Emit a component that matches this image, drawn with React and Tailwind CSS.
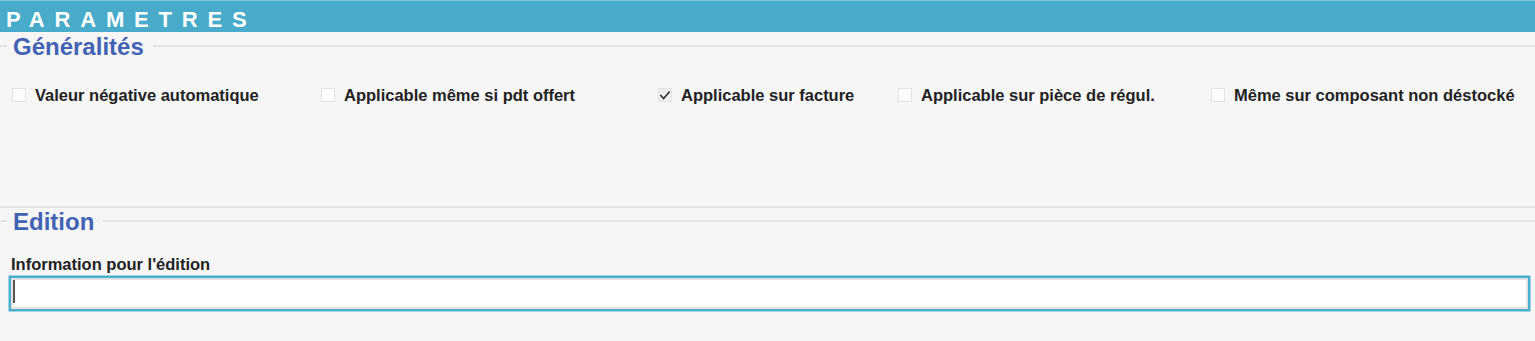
import React from "react";

const font = { fontFamily: '"Liberation Sans", Arial, Helvetica, sans-serif' };

function Box({ checked }) {
  return (
    <span
      className={`flex h-[14px] w-[14px] shrink-0 items-center justify-center border border-[#e3e3e3] ${
        checked ? "bg-[#eeeeee]" : "bg-[#fdfdfd]"
      }`}
    >
      {checked && (
        <svg width="13" height="13" viewBox="0 0 13 13" fill="none">
          <path d="M2 6.6 L5 9.8 L11 2.8" stroke="#2b2b2b" strokeWidth="1.6" strokeLinecap="square" />
        </svg>
      )}
    </span>
  );
}

function Check({ label, checked }) {
  return (
    <label className="flex items-center gap-[9px] whitespace-nowrap">
      <Box checked={checked} />
      <span className="text-[16.5px] font-bold leading-[20px] text-[#222]">{label}</span>
    </label>
  );
}

function Legend({ children }) {
  return (
    <div className="flex items-start">
      <div className="mt-[12px] h-[2px] w-[7px] bg-[#e4e4e4]" />
      <span className="pl-[6px] pr-[9px] text-[24px] font-bold leading-[28px] text-[#4262b3]">
        {children}
      </span>
      <div className="mt-[12px] h-[2px] flex-1 bg-[#e4e4e4]" />
    </div>
  );
}

export default function App() {
  return (
    <div className="min-h-[341px] w-full bg-[#f6f6f6]" style={font}>
      <div className="h-[32px] border-t border-[#7fc4da] bg-[#47abc9] pl-[6px] pt-[8px]">
        <span className="block text-[22px] font-bold leading-[22px] tracking-[9.8px] text-white">
          PARAMETRES
        </span>
      </div>

      <section className="mt-[1px] border-b-2 border-[#e4e4e4]">
        <Legend>Généralités</Legend>
        <div className="mt-[24px] grid h-[121px] grid-cols-[309px_337px_240px_313px_1fr] items-start pl-[12px]">
          <Check label="Valeur négative automatique" />
          <Check label="Applicable même si pdt offert" />
          <Check label="Applicable sur facture" checked />
          <Check label="Applicable sur pièce de régul." />
          <Check label="Même sur composant non déstocké" />
        </div>
      </section>

      <section>
        <Legend>Edition</Legend>
        <div className="mt-[18px] pl-[11px] text-[16.5px] font-bold leading-[20px] text-[#222]">
          Information pour l'édition
        </div>
        <div className="relative mr-[7px] ml-[11px] mt-[4px]">
          <input
            type="text"
            readOnly
            className="block h-[30.5px] w-full border-2 border-[#e3e3e3] bg-white px-[2px] text-[16px] outline-none ring-[2.5px] ring-[#4aaecd]"
          />
          <span className="absolute left-[2px] top-[2px] h-[23px] w-[2px] bg-[#555]" />
        </div>
      </section>
    </div>
  );
}
